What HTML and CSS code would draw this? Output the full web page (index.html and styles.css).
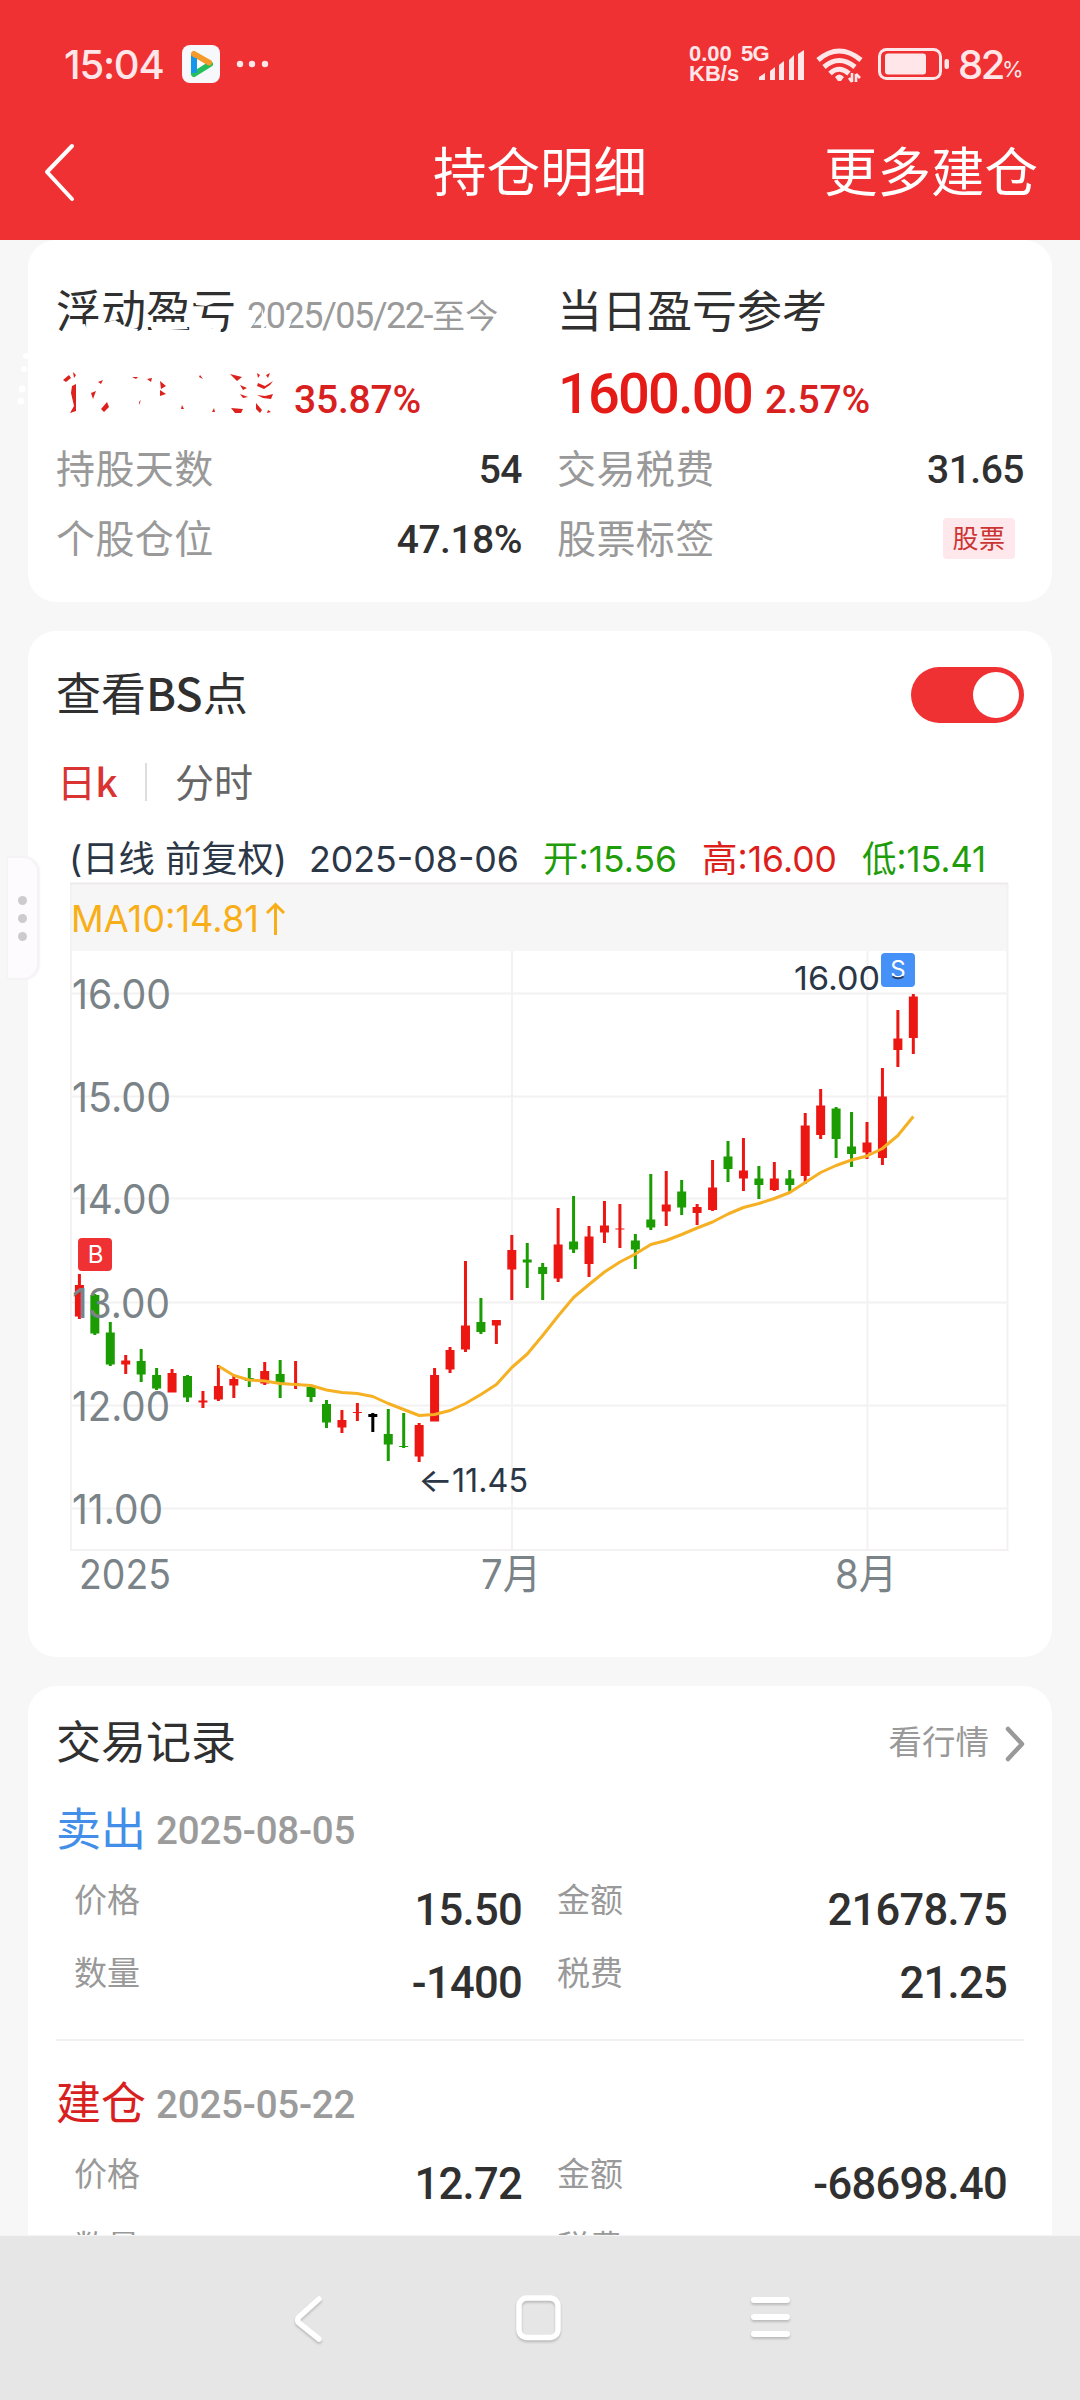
FILE: index.html
```html
<!DOCTYPE html>
<html lang="zh-CN">
<head>
<meta charset="utf-8">
<title>持仓明细</title>
<link rel="stylesheet" href="styles.css">
</head>
<body>
<div class="screen">
  <header class="header">
    <div class="status">
      <div class="status-left">
        <span class="clock">15:04</span>
        <svg class="app-icon" width="38" height="38" viewBox="0 0 38 38">
          <rect width="38" height="38" rx="8" fill="#f6f8fc"/>
          <path d="M12 10V28" stroke="#1596ea" stroke-width="6" stroke-linecap="round"/>
          <path d="M12 29L28 19" stroke="#27bf5c" stroke-width="6" stroke-linecap="round"/>
          <path d="M12 9L27 17.500" stroke="#f39a2a" stroke-width="6" stroke-linecap="round"/>
          <path d="M12 13V28" stroke="#1596ea" stroke-width="6"/>
          <path d="M15 14.500L23 19L15 24Z" fill="#fff"/>
        </svg>
        <svg width="34" height="8" viewBox="0 0 34 8" fill="#ffe6e8"><circle cx="4" cy="4" r="3.200"/><circle cx="16" cy="4" r="3.200"/><circle cx="29" cy="4" r="3.200"/></svg>
      </div>
      <div class="status-right">
        <div class="speed"><span>0.00</span><span>KB/s</span></div>
        <span class="net">5G</span>
        <svg class="signal" width="46" height="38" viewBox="16 0 46 38" fill="#ffe6e8">
          <path d="M17 32L23 28V35H17ZM28 26L33 22V35H28ZM37 20L42 16V35H37ZM47 15L52 10V35H47ZM56 9L62 5V35H56Z"/>
        </svg>
        <svg class="wifi" width="48" height="38" viewBox="0 0 48 38" fill="none" stroke="#ffe6e8" stroke-width="5">
          <path d="M2 15Q23 -3 45 15"/><path d="M8 22Q23 9 39 22"/><path d="M14 28.500Q23 20 33 28.500"/>
          <path d="M19 32Q23 27 28 32L25 36H22Z" fill="#ffe6e8" stroke="none"/>
          <path d="M36 28V37M36 37L33 33M40 37V29M40 29L44 33" stroke-width="2.600"/>
        </svg>
        <svg class="battery" width="72" height="32" viewBox="0 0 72 32">
          <rect x="1.500" y="1.500" width="61" height="29" rx="7" fill="none" stroke="#ffe6e8" stroke-width="3"/>
          <rect x="7" y="5.500" width="41" height="21" rx="3" fill="#ffe6e8"/><rect x="66.500" y="11" width="4.500" height="10" rx="2" fill="#ffe6e8"/>
        </svg>
        <span class="pct">82</span><span class="pct-sign">%</span>
      </div>
    </div>
    <div class="titlebar">
      <svg width="32" height="60" viewBox="0 0 32 60"><path d="M30 4L5 30L30 57" fill="none" stroke="#fff" stroke-width="4" stroke-linecap="round" stroke-linejoin="round"/></svg>
      <h1>持仓明细</h1>
      <span class="more">更多建仓</span>
    </div>
  </header>

  <main class="content">
    <section class="card summary">
      <div class="col">
        <div class="sum-head"><h2>浮动盈亏</h2><span class="since">2025/05/22-<b>至今</b></span></div>
        <div class="sum-amount"><span class="hidden-amount"></span><span class="rate">35.87%</span></div>
        <div class="pair"><span>持股天数</span><b>54</b></div>
        <div class="pair"><span>个股仓位</span><b>47.18%</b></div>
        <svg class="scrub" width="300" height="150" viewBox="16 280 300 150">
          <g fill="#fff"><circle cx="26" cy="356" r="3"/><circle cx="24" cy="369" r="3"/><circle cx="22" cy="389" r="3.500"/><circle cx="21" cy="401" r="3.500"/>
          <path d="M65 326L85 324L88 333L65 335ZM100 324L115 320L124 326L138 329L136 335L102 335ZM148 322L184 322L188 329L170 330L152 330ZM150 331L186 331V336L150 336ZM194 298L236 296L232 302L214 303L206 306L196 305ZM190 309L200 312L198 324L190 318ZM205 328L221 329L220 335H204ZM248 316L258 309L255 322L249 330ZM262 308L266 326L261 330ZM283 325L292 320L290 326L285 333Z"/></g>
          <g fill="#dd211d"><path d="M63 380L69 375L71 378L66 382ZM73 372L76 375L74 378ZM72 386L76 384V411L70 413L74 406L71 393ZM98 382L103 380L101 384ZM91 393L96 391L93 399ZM101 409L107 402L109 407L104 412ZM132 377H138L136 379ZM147 379L152 378L151 382ZM160 381L166 386L161 389ZM160 390L166 394L160 396ZM139 402L141 400L139 405ZM182 405L184 409H181ZM200 375L203 379L199 377ZM212 412L214 408L215 412ZM230 374L242 377L237 381ZM240 385L247 388L243 390ZM240 394L248 397L243 398ZM231 408L243 409L241 413H235ZM257 373L260 375L258 378ZM266 375L270 373L268 378ZM258 383L265 386L273 381L270 385L264 389L257 386ZM257 395L265 396L273 394L271 399L263 398ZM256 403L262 410L260 413L256 409ZM268 410L271 412L267 413Z"/></g>
        </svg>
      </div>
      <div class="col">
        <div class="sum-head"><h2>当日盈亏参考</h2></div>
        <div class="sum-amount"><span class="amount">1600.00</span><span class="rate">2.57%</span></div>
        <div class="pair"><span>交易税费</span><b>31.65</b></div>
        <div class="pair"><span>股票标签</span><em class="tag">股票</em></div>
      </div>
    </section>

    <section class="card chart-card">
      <div class="chart-head"><h2>查看<b>BS</b>点</h2><div class="toggle"><i></i></div></div>
      <div class="tabs"><span class="tab-on">日<b>k</b></span><i></i><span>分时</span></div>
      <svg class="chart" width="1024" height="780" viewBox="28 830 1024 780">
        <g fill="#2b3747" class="info">
          <text x="69" y="872" textLength="218" lengthAdjust="spacingAndGlyphs">(日线 前复权)</text>
          <text x="309" y="872" textLength="210" lengthAdjust="spacingAndGlyphs">2025-08-06</text>
          <text x="543" y="872" textLength="134" lengthAdjust="spacingAndGlyphs" fill="#1f9c0a">开:15.56</text>
          <text x="702" y="872" textLength="135" lengthAdjust="spacingAndGlyphs" fill="#dd1f1c">高:16.00</text>
          <text x="862" y="872" textLength="124" lengthAdjust="spacingAndGlyphs" fill="#1f9c0a">低:15.41</text>
        </g>
        <rect x="70" y="883" width="938" height="68" fill="#f6f6f6"/>
        <path d="M71 993.500H1007M71 1096.500H1007M71 1198.500H1007M71 1302.500H1007M71 1405.500H1007M71 1508.500H1007M512 951V1550M867.500 951V1550M71 883V1550H1007.500V883" fill="none" stroke="#f4f1f3" stroke-width="2"/>
        <path d="M70 883.500H1008" stroke="#edeaec" stroke-width="2"/>
        <text x="71" y="932" class="ma" textLength="188" lengthAdjust="spacingAndGlyphs">MA10:14.81</text>
        <path d="M275.500 935V905M267 913L275.500 904.500L284 913" fill="none" stroke="#f8ae18" stroke-width="3"/>
        <g id="candles"></g>
        <polyline id="ma10" fill="none" stroke="#f6b024" stroke-width="3" stroke-linejoin="round"/>
        <g class="axis">
          <text x="72" y="1009" textLength="99" lengthAdjust="spacingAndGlyphs">16.00</text>
          <text x="72" y="1112" textLength="99" lengthAdjust="spacingAndGlyphs">15.00</text>
          <text x="72" y="1214" textLength="99" lengthAdjust="spacingAndGlyphs">14.00</text>
          <text x="72" y="1317.500" textLength="98" lengthAdjust="spacingAndGlyphs">13.00</text>
          <text x="72" y="1421" textLength="98" lengthAdjust="spacingAndGlyphs">12.00</text>
          <text x="72" y="1524" textLength="91" lengthAdjust="spacingAndGlyphs">11.00</text>
          <text x="79" y="1588.500" textLength="92" lengthAdjust="spacingAndGlyphs">2025</text>
          <text x="481" y="1588.500" textLength="60" lengthAdjust="spacingAndGlyphs">7月</text>
          <text x="835" y="1588.500" textLength="62" lengthAdjust="spacingAndGlyphs">8月</text>
        </g>
        <g class="mark">
          <text x="794" y="990" textLength="86" lengthAdjust="spacingAndGlyphs">16.00</text>
          <text x="418" y="1491.500" textLength="35" lengthAdjust="spacingAndGlyphs">←</text>
          <text x="452" y="1491.500" textLength="76" lengthAdjust="spacingAndGlyphs">11.45</text>
        </g>
        <rect x="78" y="1238" width="34" height="33" rx="4" fill="#ef3133"/>
        <text x="95.500" y="1263" class="badge">B</text>
        <rect x="881" y="953" width="34" height="34" rx="4" fill="#4691f7"/>
        <text x="898" y="978" class="badge">S</text>
        <path d="M892.500 976.500Q898 980 903.500 976.500" fill="none" stroke="#263b60" stroke-width="2"/>
      </svg>
    </section>

    <section class="card records">
      <div class="rec-title"><h2>交易记录</h2><span>看行情</span><svg width="20" height="36" viewBox="0 0 20 36"><path d="M4 4L18 19L4 34" fill="none" stroke="#999" stroke-width="4.500" stroke-linecap="round" stroke-linejoin="round"/></svg></div>
      <div class="record">
        <div class="rec-head"><span class="sell">卖出</span><time>2025-08-05</time></div>
        <div class="rec-row"><span>价格</span><b>15.50</b><span>金额</span><b>21678.75</b></div>
        <div class="rec-row"><span>数量</span><b>-1400</b><span>税费</span><b>21.25</b></div>
      </div>
      <div class="record">
        <div class="rec-head"><span class="buy">建仓</span><time>2025-05-22</time></div>
        <div class="rec-row"><span>价格</span><b>12.72</b><span>金额</span><b>-68698.40</b></div>
        <div class="rec-row"><span>数量</span><b></b><span>税费</span><b></b></div>
      </div>
    </section>
  </main>

  <nav class="navbar">
    <svg width="32" height="54" viewBox="0 0 32 54"><path d="M27 7L7 25Q4 28 7 31L27 47" fill="none" stroke="#fff" stroke-width="5.500" stroke-linecap="round"/></svg>
    <svg width="50" height="54" viewBox="0 0 50 54"><rect x="9" y="6" width="39" height="39.500" rx="8" fill="none" stroke="#fff" stroke-width="5.500"/></svg>
    <svg width="50" height="54" viewBox="0 0 50 54"><path d="M8 8H41M8 25H41M8 42H41" stroke="#fff" stroke-width="6" stroke-linecap="round"/></svg>
  </nav>
  <div class="handle"><i></i><i></i><i></i></div>
</div>
<script src="chart.js"></script>
</body>
</html>
```
FILE: styles.css
```css
* { box-sizing: border-box; }
body { margin: 0; background: #f7f7f7; font-family: "Noto Sans CJK SC", sans-serif; color: #303030; }
h1, h2 { margin: 0; font-weight: 400; }
b { font-weight: 500; }
svg { display: block; flex: none; overflow: visible; }
.screen { position: relative; width: 1080px; height: 2400px; display: flex; flex-direction: column; overflow: hidden; }

.header { height: 240px; flex: none; background: #ef3133; color: #fff; }
.status { height: 128px; padding: 0 58px 0 64px; display: flex; justify-content: space-between; align-items: center; color: #ffe6e8; font-family: Inter, sans-serif; }
.status-left, .status-right { display: flex; align-items: center; }
.clock { width: 101px; font-size: 40px; letter-spacing: -1.200px; font-weight: 500; white-space: nowrap; }
.app-icon { margin: 0 16px 0 17px; }
.speed { width: 52px; display: flex; flex-direction: column; font: 700 22px/20px "Liberation Sans", sans-serif; white-space: nowrap; }
.speed span { width: 50px; }
.net { width: 29px; margin-bottom: 20px; font: 700 22px/20px "Liberation Sans", sans-serif; letter-spacing: -.8px; }
.signal { margin-left: -12px; }
.wifi { margin-left: 12px; }
.battery { margin: 0 8px 0 14px; }
.pct { font-size: 40px; width: 45px; letter-spacing: -2.500px; font-weight: 500; }
.pct-sign { font-size: 22px; width: 20px; padding-top: 10px; margin-left: -1px; }
.titlebar { height: 112px; padding: 0 42px 24px; display: grid; grid-template-columns: 240px 1fr 240px; align-items: center; font-size: 53.500px; line-height: 80px; }
.titlebar h1 { font-size: 53.500px; text-align: center; }
.more { text-align: right; white-space: nowrap; }
.titlebar h1, .more { margin-top: -6px; }

.content { height: 1995px; flex: none; padding: 0 28px; overflow: hidden; display: flex; flex-direction: column; gap: 29px; }
.card { background: #fff; border-radius: 28px; flex: none; }
h2 { font-size: 45px; line-height: 60px; }

.summary { height: 362px; padding: 39px 28px 0; display: grid; grid-template-columns: 466px 467px; column-gap: 35px; }
.col { position: relative; }
.sum-head { height: 64px; display: flex; align-items: baseline; white-space: nowrap; }
.since { margin-left: 11px; font: 400 36px/40px Roboto, sans-serif; letter-spacing: -1.500px; color: #9a9a9a; }
.since b { font: 400 33px "Noto Sans CJK SC", sans-serif; letter-spacing: .3px; }
.sum-amount { height: 89px; display: flex; align-items: baseline; font-family: Roboto, sans-serif; color: #d8211f; }
.hidden-amount { width: 238px; height: 70px; }
.amount { padding-left: 1px; width: 208px; font-size: 56px; line-height: 102px; letter-spacing: -1.800px; font-weight: 500; color: #e51b18; }
.rate { font-size: 39px; line-height: 80px; font-weight: 500; letter-spacing: -.2px; }
.pair { height: 70px; display: flex; justify-content: space-between; align-items: center; font-size: 39px; line-height: 60px; letter-spacing: .4px; color: #999; }
.pair > span { padding-bottom: 3px; }
.pair b { padding-top: 5px; font: 500 39px/60px Roboto, sans-serif; letter-spacing: -.5px; color: #303030; }
.tag { width: 72px; height: 41px; margin: 3px 9px 0 0; border-radius: 4px; background: #ffe8eb; color: #cc3433; font: 400 26px/37px "Noto Sans CJK SC", sans-serif; text-align: center; }
.scrub { position: absolute; left: -40px; top: 1px; }

.chart-card { height: 1026px; padding-top: 28px; }
.chart-head { height: 72px; padding: 0 28px; display: flex; justify-content: space-between; align-items: center; }
.chart-head h2 { padding-bottom: 7px; }
.toggle { width: 113px; height: 56px; border-radius: 28px; background: #ef3133; padding: 5px; display: flex; justify-content: flex-end; }
.toggle i { width: 46px; height: 46px; border-radius: 50%; background: #fff; }
.tabs { height: 99px; padding: 0 28px 0 29px; display: flex; align-items: center; font-size: 39px; line-height: 60px; color: #666; }
.tabs span { padding-bottom: 1px; }
.tab-on { width: 88px; color: #d93432; white-space: nowrap; letter-spacing: -.8px; }
.tabs i { width: 2px; height: 38px; margin: 2px 28px 0 0; background: #ddd; }
.chart { font-family: Inter, "Noto Sans CJK SC", sans-serif; }
.info { font-size: 36px; }
.ma { font-size: 37px; fill: #f8ae18; }
.axis { font-size: 41px; fill: #7a8387; }
.mark { font-size: 33px; fill: #2b3747; }
.badge { font-size: 24px; fill: #fff; text-anchor: middle; }

.records { height: 700px; padding: 24px 28px 0; }
.rec-title { height: 66px; display: flex; align-items: center; font-size: 33.500px; color: #999; }
.rec-title h2 { flex: 1; color: #303030; padding-bottom: 6px; }
.rec-title span { padding-bottom: 8px; }
.rec-title svg { margin-left: 15px; }
.record { height: 274px; border-bottom: 2px solid #f0f0f0; padding-top: 18px; }
.record:nth-child(2) { height: 265px; padding-top: 9px; }
.rec-head { height: 88px; display: flex; align-items: baseline; font-size: 45px; line-height: 84px; }
.rec-head time { margin-left: 10px; font: 500 38.500px/60px Roboto, sans-serif; letter-spacing: -.2px; color: #9b9b9b; position: relative; top: -2px; }
.sell { color: #438ee8; }
.buy { color: #d8211f; }
.rec-row { height: 73px; padding: 0 17px 0 18px; display: grid; grid-template-columns: 90px 358px 90px 1fr; font-size: 33px; line-height: 50px; color: #999; }
.rec-row span:nth-child(3) { padding-left: 35px; white-space: nowrap; }
.rec-row b { height: 73px; font: 500 43.500px/76px Roboto, sans-serif; color: #303030; text-align: right; letter-spacing: -.7px; }

.navbar { height: 165px; flex: none; background: #e6e6e6; border-top: 1px solid #f4f4f4; padding: 56px 284px 0 292px; display: flex; justify-content: space-between; }
.navbar svg { filter: drop-shadow(0 2px 1px #bbb); }
.handle { position: absolute; left: 8px; top: 858px; width: 29px; height: 120px; border-radius: 0 14px 14px 0; background: #fdfbfe; box-shadow: 1px 0 2px 2px #f5f2f5; display: flex; flex-direction: column; align-items: center; justify-content: center; gap: 9px; }
.handle i { width: 9px; height: 9px; border-radius: 50%; background: #ccc; }
```
FILE: chart.js
```js
// Each candle: [high, body top, body bottom, low, colour], in chart units.
const R = '#ec1613', G = '#1b9c03', K = '#000';
const candles = [
[1274,1285,1316.5,1319,R],[1294,1295,1333.5,1335,G],[1322,1332.5,1364.5,1366,G],[1355,1360.5,1364.5,1374,R],[1349,1361,1374.5,1382,G],
[1368,1375,1388.5,1390,G],[1369,1373,1392.5,1392.5,R],[1375,1376,1397.5,1402,G],[1391,1400.5,1402.5,1408,R],[1365,1386,1399.5,1401,R],
[1376,1379,1385.5,1398,R],[1368,1378,1381,1387,G],[1362,1371,1383.5,1385,R],[1360,1374,1383.5,1398,G],[1361,1383.5,1384.5,1389,R],
[1385,1387,1397,1402,G],[1400,1404,1422.5,1428,G],[1410,1420,1427.5,1433,R],[1403,1412,1413,1421,R],[1413,1414,1417,1432,K],
[1409,1434,1444.5,1461,G],[1413,1446,1447,1448,G],[1423,1425,1456.5,1462,R],[1368,1375,1421.5,1421.5,R],[1347,1350,1369.5,1373,R],
[1261,1325.5,1349.5,1352,R],[1298,1322,1332,1334,G],[1320,1320,1325.5,1344,R],[1235,1250,1269.5,1300,R],[1243,1259.5,1262.5,1288,G],
[1263,1267,1274,1300,G],[1208,1244.5,1278.5,1282,R],[1196,1241.5,1249.5,1253,G],[1226,1236.5,1264,1277,R],[1201,1225.5,1232.5,1243,R],
[1204,1228.5,1229.5,1248,R],[1234,1240.5,1249.5,1269,G],[1174,1219.5,1227.5,1230,G],[1171,1204.5,1211.5,1226,R],[1180,1191.5,1207.5,1215,G],
[1204,1207,1213,1225,R],[1160,1187.5,1210,1211,R],[1141,1156.5,1169,1182,G],[1138,1170.5,1178.5,1191,R],[1166,1178.5,1185,1199,G],
[1162,1178.5,1190,1191,R],[1170,1178.5,1185,1192,G],[1113,1125.5,1176,1184,R],[1089,1105.5,1135,1139,R],[1107,1108.5,1139,1158,G],
[1112,1146.5,1154,1167,G],[1122,1142.5,1152.5,1159,R],[1068,1096.5,1158,1165,R],[1010,1038.5,1050,1067,R],[994,996.5,1038,1054,R]];
// MA10 starts at the tenth candle.
const ma10 = [1366,1375.5,1380,1381,1383.5,1384.5,1385.5,1390,1392.5,1393.5,1396.5,1403.5,1409.5,1415.5,1414.5,1410.5,1403.5,1394.5,1384.5,1367.5,1354,1335.5,1316,1297.5,1284.5,1272,1262,1254,1244.5,1240.5,1234.5,1228,1222,1214,1207.5,1203.5,1198.5,1192.5,1182.5,1172.5,1165.5,1160,1156,1148.5,1135.5,1116.5];
const x = i => 79.4 + i * 15.443;
document.getElementById('candles').innerHTML = candles.map(([h, t, b, l, c], i) =>
  `<path fill="${c}" d="M${x(i) - 1.5} ${h}h3V${l}h-3ZM${x(i) - 4.5} ${t}h9V${b}h-9Z"/>`).join('');
document.getElementById('ma10').setAttribute('points', ma10.map((y, i) => `${x(i + 9)},${y}`).join(' '));
```
